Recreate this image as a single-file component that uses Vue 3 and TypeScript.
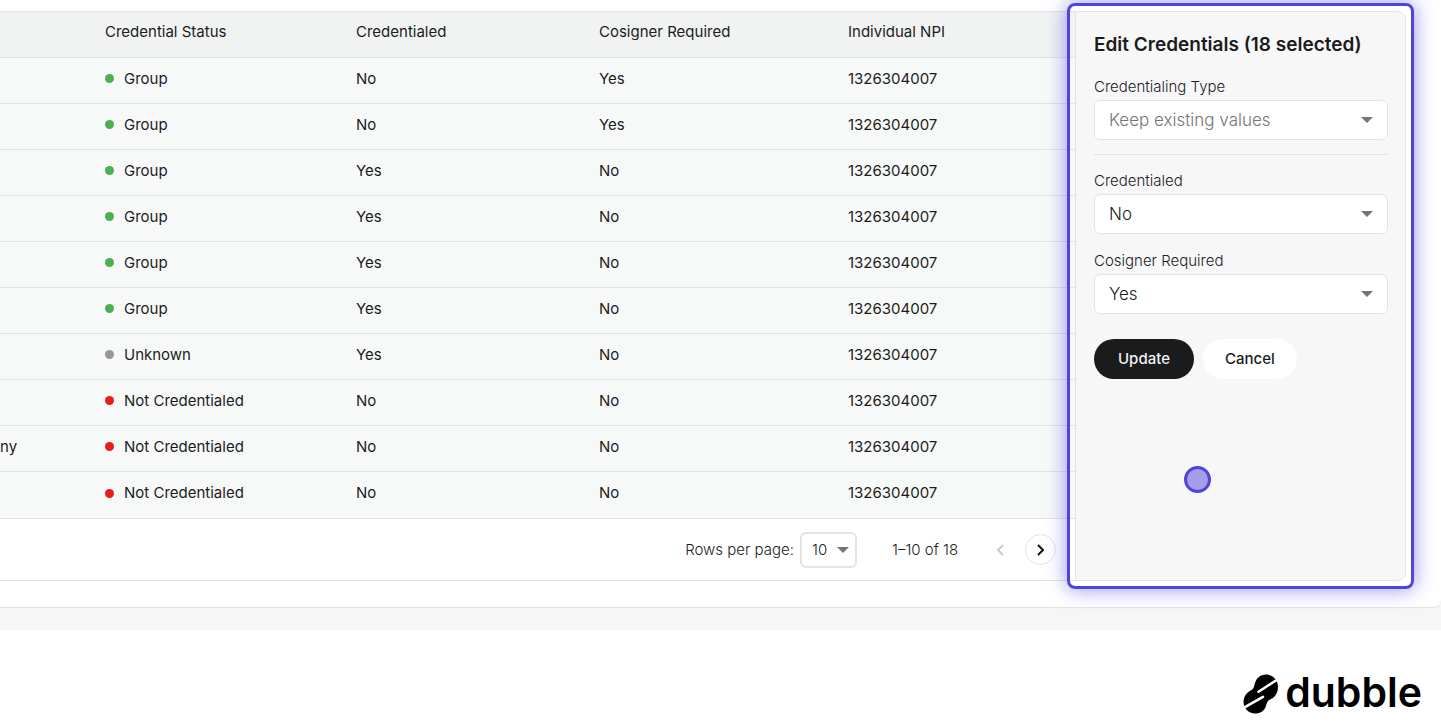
<script setup lang="ts">
import { ref } from 'vue'

type Status = 'Group' | 'Unknown' | 'Not Credentialed'

interface Row {
  payer: string
  status: Status
  credentialed: string
  cosigner: string
  npi: string
}

const makeRow = (status: Status, credentialed: string, cosigner: string, payer = ''): Row => ({
  payer,
  status,
  credentialed,
  cosigner,
  npi: '1326304007',
})

const rows: Row[] = [
  makeRow('Group', 'No', 'Yes'),
  makeRow('Group', 'No', 'Yes'),
  makeRow('Group', 'Yes', 'No'),
  makeRow('Group', 'Yes', 'No'),
  makeRow('Group', 'Yes', 'No'),
  makeRow('Group', 'Yes', 'No'),
  makeRow('Unknown', 'Yes', 'No'),
  makeRow('Not Credentialed', 'No', 'No'),
  makeRow('Not Credentialed', 'No', 'No', 'ny'),
  makeRow('Not Credentialed', 'No', 'No'),
]

const dotClass: Record<Status, string> = {
  Group: 'green',
  Unknown: 'grey',
  'Not Credentialed': 'red',
}

const credentialingType = ref('Keep existing values')
const credentialed = ref('No')
const cosignerRequired = ref('Yes')
const pageSize = ref('10')
</script>

<template>
  <div class="page">
    <div class="workspace">
      <main class="card">
        <section class="listing">
          <table>
            <colgroup>
              <col class="col-payer" />
              <col class="col-status" />
              <col class="col-credentialed" />
              <col class="col-cosigner" />
              <col />
            </colgroup>
            <thead>
              <tr>
                <td></td>
                <th scope="col">Credential Status</th>
                <th scope="col">Credentialed</th>
                <th scope="col">Cosigner Required</th>
                <th scope="col">Individual NPI</th>
              </tr>
            </thead>
            <tbody>
              <tr v-for="(row, i) in rows" :key="i">
                <td class="payer">{{ row.payer }}</td>
                <td>
                  <span class="status"><span class="dot" :class="dotClass[row.status]"></span>{{ row.status }}</span>
                </td>
                <td>{{ row.credentialed }}</td>
                <td>{{ row.cosigner }}</td>
                <td>{{ row.npi }}</td>
              </tr>
            </tbody>
          </table>
          <div class="pagination">
            <label for="page-size">Rows per page:</label>
            <span class="select small">
              <select id="page-size" v-model="pageSize">
                <option>10</option>
              </select>
              <svg viewBox="0 0 10 5" aria-hidden="true"><path d="M0 0h10L5 5z" /></svg>
            </span>
            <span class="range">1–10 of 18</span>
            <button class="pager" type="button" aria-label="Previous page" disabled>
              <svg viewBox="0 0 12 12" aria-hidden="true"><path d="M8 1 3 6l5 5" /></svg>
            </button>
            <button class="pager next" type="button" aria-label="Next page">
              <svg viewBox="0 0 12 12" aria-hidden="true"><path d="m3 1 5 5-5 5" /></svg>
            </button>
          </div>
        </section>

        <aside class="panel">
          <h2>Edit Credentials (18 selected)</h2>
          <form @submit.prevent>
            <div class="field">
              <label for="type">Credentialing Type</label>
              <span class="select muted">
                <select id="type" v-model="credentialingType">
                  <option>Keep existing values</option>
                </select>
                <svg viewBox="0 0 10 5" aria-hidden="true"><path d="M0 0h10L5 5z" /></svg>
              </span>
            </div>
            <hr />
            <div class="field">
              <label for="credentialed">Credentialed</label>
              <span class="select">
                <select id="credentialed" v-model="credentialed">
                  <option>No</option>
                  <option>Yes</option>
                </select>
                <svg viewBox="0 0 10 5" aria-hidden="true"><path d="M0 0h10L5 5z" /></svg>
              </span>
            </div>
            <div class="field">
              <label for="cosigner">Cosigner Required</label>
              <span class="select">
                <select id="cosigner" v-model="cosignerRequired">
                  <option>No</option>
                  <option>Yes</option>
                </select>
                <svg viewBox="0 0 10 5" aria-hidden="true"><path d="M0 0h10L5 5z" /></svg>
              </span>
            </div>
            <div class="actions">
              <button class="update" type="submit">Update</button>
              <button class="cancel" type="button">Cancel</button>
            </div>
          </form>
          <div class="highlight"></div>
          <div class="cursor"></div>
        </aside>
      </main>
    </div>

    <footer class="brand">
      <svg class="mark" viewBox="0 0 36 40" aria-hidden="true">
        <path class="body" d="M23 .5C29.500 .5 35 6 35 12.500C35 20 31 24 27 25.500C24 27 24 29 23 32C21.500 37 17 39.500 12 39.500C5.500 39.500 .5 34 .5 28C.5 22 4.500 18 8.500 16C11 14.800 11 12 12 9C13.500 4 17.500 .5 23 .5Z" />
        <path class="slash" d="M15.500 17.800 36 4.500M-1 34.800 20 22.800" />
      </svg>
      <span>dubble</span>
    </footer>
  </div>
</template>

<style>
body {
  margin: 0;
  background: #fff;
}
</style>

<style scoped>
* {
  box-sizing: border-box;
}

.page {
  font-family: Inter, "Liberation Sans", sans-serif;
  font-size: 15px;
  line-height: 20px;
  color: #1b1c1d;
  overflow: hidden;
}

.workspace {
  background: #f6f6f6;
  padding-bottom: 22px;
}

.card {
  display: flex;
  padding: 11px 35px 26px 0;
  background: #fff;
  border-bottom: 1px solid #e2e4e4;
  border-bottom-right-radius: 8px;
}

.listing {
  flex: 1;
  min-width: 0;
  border: solid #e2e4e4;
  border-width: 1px 0;
}

table {
  width: 100%;
  table-layout: fixed;
  border-collapse: separate;
  border-spacing: 0;
}

.col-payer {
  width: 89px;
}

.col-status {
  width: 251px;
}

.col-credentialed {
  width: 243px;
}

.col-cosigner {
  width: 249px;
}

th,
td {
  height: 46px;
  padding: 0 0 4px 16px;
  border-bottom: 1px solid #e2e4e4;
  background: #f7f9f8;
  font-weight: 400;
  text-align: left;
  white-space: nowrap;
}

thead th,
thead td {
  background: #f1f3f2;
  padding-bottom: 6px;
}

tbody tr:last-child td {
  border-bottom: 0;
}

tbody td.payer {
  padding-left: 0;
}

.status {
  display: flex;
  align-items: center;
  gap: 10px;
}

.dot {
  width: 9px;
  height: 9px;
  border-radius: 50%;
}

.green {
  background: #4caf50;
}

.grey {
  background: #979797;
}

.red {
  background: #e91c1c;
}

.pagination {
  display: flex;
  align-items: center;
  justify-content: flex-end;
  height: 62px;
  padding-right: 19px;
  border-top: 1px solid #e2e4e4;
  font-weight: 300;
}

.select {
  display: grid;
  align-items: center;
}

.select select,
.select svg {
  grid-area: 1 / 1;
}

.select select {
  appearance: none;
  width: 100%;
  height: 40px;
  padding: 0 40px 0 14px;
  border: 1px solid #e4e4e4;
  border-radius: 6px;
  background: #fff;
  color: #1b1c1d;
  font: inherit;
  font-size: 17px;
  font-weight: 300;
}

.select svg {
  width: 12px;
  height: 6px;
  margin-right: 15px;
  justify-self: end;
  fill: #757575;
  pointer-events: none;
}

.select.muted select {
  color: #757575;
}

.select.small {
  width: 57px;
  margin: 0 35px 0 6px;
}

.select.small select {
  height: 36px;
  padding: 0 20px 0 10px;
  border-width: 2px;
  font-size: 15px;
}

.select.small svg {
  margin-right: 8px;
}

.range {
  min-width: 71px;
  margin-right: 22px;
}

.pager {
  display: grid;
  place-items: center;
  width: 31px;
  height: 31px;
  padding: 0;
  border: 0;
  background: none;
}

.pager svg {
  width: 12px;
  height: 12px;
  fill: none;
  stroke: #c9c9c9;
  stroke-width: 2;
}

.pager.next {
  margin-left: 9px;
  border: 1px solid #e4e4e4;
  border-radius: 50%;
  background: #fff;
}

.pager.next svg {
  stroke: #111;
}

.panel {
  position: relative;
  width: 331px;
  padding: 21px 17px 0 18px;
  border: 1px solid #e4e4e4;
  border-radius: 0 8px 8px 0;
  background: #f7f7f7;
}

h2 {
  margin: 0 0 20px;
  font-size: 19px;
  line-height: 24px;
  font-weight: 600;
  white-space: nowrap;
}

.field {
  display: grid;
  gap: 3px;
  margin-bottom: 17px;
}

.field label {
  font-weight: 300;
}

hr {
  height: 1px;
  margin: -3px 0 16px;
  border: 0;
  background: #e2e4e4;
}

.actions {
  display: flex;
  gap: 9px;
  padding-top: 8px;
}

.actions button {
  height: 40px;
  padding: 0 22px;
  border: 0;
  border-radius: 20px;
  font: inherit;
  font-weight: 500;
}

.actions .update {
  padding: 0 24px;
  background: #1a1b1d;
  color: #f1f1f1;
}

.cancel {
  background: #fff;
  color: #1b1c1d;
}

.highlight {
  position: absolute;
  inset: -9px;
  border: 3px solid #5244db;
  border-radius: 8px;
  box-shadow: 0 0 20px rgba(82, 68, 219, 0.6);
  pointer-events: none;
}

.cursor {
  position: absolute;
  left: 108px;
  top: 454px;
  width: 27px;
  height: 27px;
  border: 3px solid #5244db;
  border-radius: 50%;
  background: #a49fe8;
}

.brand {
  display: flex;
  align-items: flex-end;
  justify-content: flex-end;
  gap: 6px;
  padding: 38px 19px 0 0;
  color: #000;
  font-size: 41px;
  line-height: 48px;
  font-weight: 600;
}

.mark {
  width: 36px;
  height: 40px;
  margin-bottom: 2px;
}

.mark .body {
  fill: #000;
}

.mark .slash {
  fill: none;
  stroke: #fff;
  stroke-width: 2.5;
  stroke-linecap: round;
}
</style>
